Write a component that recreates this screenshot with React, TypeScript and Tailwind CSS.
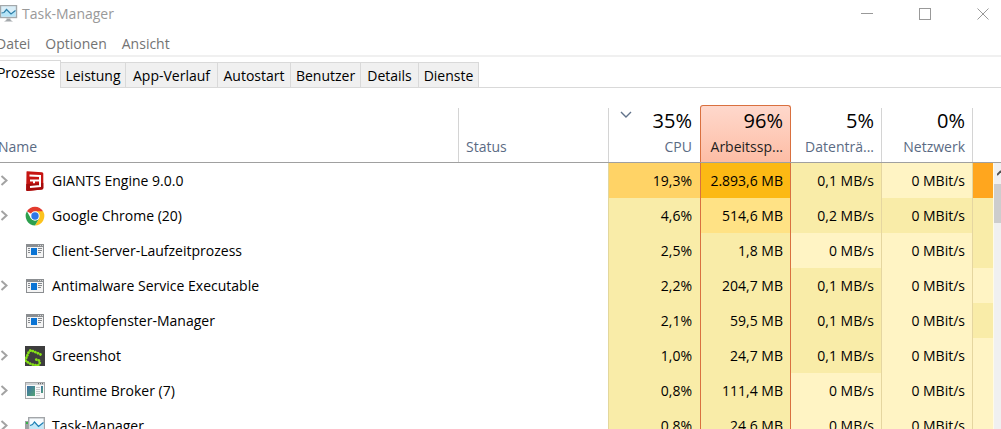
import { useState } from "react";
import type { ReactNode } from "react";
import clsx from "clsx";

type IconName = "giants" | "chrome" | "service" | "greenshot" | "broker" | "taskmgr";
type Heat = "low" | "mid" | "warm" | "high" | "hot" | "max";

interface Process {
  name: string;
  icon: IconName;
  expandable?: boolean;
  cells: [string, Heat][];
}

const heatClass: Record<Heat, string> = {
  low: "bg-[#fff4c4]",
  mid: "bg-[#f9eca8]",
  warm: "bg-[#ffe285]",
  high: "bg-[#ffd366]",
  hot: "bg-[#fcb914]",
  max: "bg-[#ffa61e]",
};

// CPU, memory, disk, network and the partly visible GPU column
const processes: Process[] = [
  {
    name: "GIANTS Engine 9.0.0",
    icon: "giants",
    expandable: true,
    cells: [["19,3%", "high"], ["2.893,6 MB", "hot"], ["0,1 MB/s", "mid"], ["0 MBit/s", "low"], ["", "max"]],
  },
  {
    name: "Google Chrome (20)",
    icon: "chrome",
    expandable: true,
    cells: [["4,6%", "mid"], ["514,6 MB", "warm"], ["0,2 MB/s", "mid"], ["0 MBit/s", "mid"], ["", "mid"]],
  },
  {
    name: "Client-Server-Laufzeitprozess",
    icon: "service",
    cells: [["2,5%", "mid"], ["1,8 MB", "mid"], ["0 MB/s", "low"], ["0 MBit/s", "low"], ["", "mid"]],
  },
  {
    name: "Antimalware Service Executable",
    icon: "service",
    expandable: true,
    cells: [["2,2%", "mid"], ["204,7 MB", "mid"], ["0,1 MB/s", "mid"], ["0 MBit/s", "low"], ["", "low"]],
  },
  {
    name: "Desktopfenster-Manager",
    icon: "service",
    cells: [["2,1%", "mid"], ["59,5 MB", "mid"], ["0,1 MB/s", "mid"], ["0 MBit/s", "low"], ["", "mid"]],
  },
  {
    name: "Greenshot",
    icon: "greenshot",
    expandable: true,
    cells: [["1,0%", "mid"], ["24,7 MB", "mid"], ["0,1 MB/s", "mid"], ["0 MBit/s", "low"], ["", "low"]],
  },
  {
    name: "Runtime Broker (7)",
    icon: "broker",
    expandable: true,
    cells: [["0,8%", "mid"], ["111,4 MB", "mid"], ["0 MB/s", "low"], ["0 MBit/s", "low"], ["", "low"]],
  },
  {
    name: "Task-Manager",
    icon: "taskmgr",
    expandable: true,
    cells: [["0,8%", "mid"], ["24,6 MB", "mid"], ["0 MB/s", "low"], ["0 MBit/s", "low"], ["", "low"]],
  },
];

const tabs = [
  { label: "Prozesse", width: "w-[69px]" },
  { label: "Leistung", width: "w-[65px]" },
  { label: "App-Verlauf", width: "w-[92px]" },
  { label: "Autostart", width: "w-[73px]" },
  { label: "Benutzer", width: "w-[70px]" },
  { label: "Details", width: "w-[58px]" },
  { label: "Dienste", width: "w-[60px]" },
];

const cellBorder = [
  "border-l border-l-[#e3d79c] pr-2",
  "border-x border-x-[#d9703f] pr-[7px]",
  "border-r border-r-[#e5d6a0] pr-[7px]",
  "border-r border-r-[#e5d6a0] pr-[7px]",
  "",
];

function MonitorIcon() {
  return (
    <svg viewBox="0 0 18 18" className="size-[18px]" aria-hidden="true">
      <rect x="0.5" y="0.5" width="16" height="12" fill="#d9eef8" stroke="#a3a8ab" strokeWidth="1.4" />
      <path d="M1.5 8 L4 7.5 L6.5 4.5 L11 9 L15.5 5.5 V11.5 H1.5 Z" fill="#b5e4f7" />
      <path d="M1.5 8 L4 7.5 L6.5 4.5 L11 9 L15.5 5.5" fill="none" stroke="#2e7fa8" strokeWidth="1.2" />
      <path d="M6.5 13.5 h4 v1.5 l2.5 1.5 h-9 l2.5 -1.5 Z" fill="#a3a8ab" />
    </svg>
  );
}

function ProcessIcon({ name }: { name: IconName }) {
  switch (name) {
    case "giants":
      return (
        <svg viewBox="0 0 20 20" className="size-5" aria-hidden="true">
          <path d="M1.5 1 Q1.2 0.3 2.2 0.3 L17 1.3 Q18.3 1.4 18.3 2.6 V17 Q18.3 18.3 17 18.5 L2.4 20 Q1.2 20 1.2 19 Z" fill="#c61512" />
          <path d="M1.3 13 L18.3 12 V17 Q18.3 18.3 17 18.5 L2.4 20 Q1.2 20 1.2 19 Z" fill="#a50c0c" />
          <path d="M4.5 4.6 L15 5 V15 L5 15.9 M15 9.4 H5 M9 9.4 V12.2" fill="none" stroke="#fff" strokeWidth="2" />
        </svg>
      );
    case "chrome":
      return (
        <svg viewBox="0 0 20 20" className="size-5" aria-hidden="true">
          <path d="M10 10 L1.9 5.3 A9.4 9.4 0 0 1 18.1 5.3 Z" fill="#e33b2e" />
          <path d="M10 5.3 H18.1 A9.4 9.4 0 0 1 10 19.4 L14.1 12.4 Z" fill="#fcc31e" />
          <path d="M1.9 5.3 L5.9 12.4 L14.1 12.4 L10 19.4 A9.4 9.4 0 0 1 1.9 5.3 Z" fill="#2da04e" />
          <circle cx="10" cy="10" r="4.7" fill="#fff" />
          <circle cx="10" cy="10" r="3.7" fill="#2d76e8" />
        </svg>
      );
    case "service":
      return (
        <svg viewBox="0 0 20 20" className="size-5" shapeRendering="crispEdges" aria-hidden="true">
          <rect x="1" y="3" width="18" height="14" fill="#8b8e91" />
          <rect x="2" y="6" width="16" height="10" fill="#f4f4f4" />
          <path d="M13 4.5 h1 M15 4.5 h1 M17 4.5 h1" stroke="#d8d8d8" />
          <rect x="6" y="7" width="6" height="7" fill="#0b74d4" />
          <path d="M3 7.5 h2 M3 9.5 h2 M3 11.5 h2 M13 7.5 h4 M13 9.5 h4 M13 11.5 h3" stroke="#85888c" />
        </svg>
      );
    case "greenshot":
      return (
        <svg viewBox="0 0 20 20" className="size-5" aria-hidden="true">
          <rect width="20" height="20" fill="#3d3d3d" />
          <path
            d="M15.5 8.5 L12 6.8 L9 5.5 L5.5 4.2 L3.5 6.5 L2.3 9.5 L1 12.5 M0.5 14.5 L3 16.5 L6 18 L9 19 L13 19.5 L15 16.5 L14 14.5 L11.5 13.6 L9 13"
            fill="none"
            stroke="#84df16"
            strokeWidth="2.7"
            strokeLinecap="round"
            strokeDasharray="0.1 2.7"
          />
        </svg>
      );
    case "broker":
      return (
        <svg viewBox="0 0 20 20" className="size-5" aria-hidden="true">
          <defs>
            <linearGradient id="broker-pane" x1="0" y1="0" x2="1" y2="1">
              <stop offset="0" stopColor="#3b6fa8" />
              <stop offset="1" stopColor="#55a474" />
            </linearGradient>
          </defs>
          <rect x="0.5" y="1.5" width="19" height="16" fill="#f8f8f8" stroke="#a4a6a8" />
          <path d="M1 3 h18" stroke="#cfd2d4" strokeWidth="2" />
          <path d="M13 2.7 h1 M15 2.7 h1 M17 2.7 h1" stroke="#555" />
          <rect x="2" y="5" width="8" height="10" fill="url(#broker-pane)" />
          <path d="M11 6.5 h4 M11 8.5 h4 M11 10.5 h4 M11 12.5 h4 M11 14.5 h4" stroke="#c6c8ca" />
          <rect x="16" y="5" width="2" height="7" fill="url(#broker-pane)" />
        </svg>
      );
    case "taskmgr":
      return (
        <svg viewBox="0 0 20 20" className="size-5" aria-hidden="true">
          <rect x="0" y="5" width="4" height="13" fill="#9da0a3" />
          <rect x="1" y="6" width="2" height="2" fill="#36b34a" />
          <rect x="3.7" y="1.7" width="15.6" height="12.6" fill="#f6fbfe" stroke="#a3a6a9" strokeWidth="1.4" />
          <path d="M5 9.5 L7.5 8.5 L9.5 6 L13.5 10.5 L18.5 6.5 V13.5 H5 Z" fill="#c3e8f8" />
          <path d="M5 9.5 L7.5 8.5 L9.5 6 L13.5 10.5 L18.5 6.5" fill="none" stroke="#1c7fb4" strokeWidth="1.2" />
          <path d="M8 15 h7 v2 l2 1.5 h-11 l2 -1.5 Z" fill="#a3a6a9" />
        </svg>
      );
  }
}

function WindowButton({ label, children }: { label: string; children: ReactNode }) {
  return (
    <button type="button" aria-label={label} className="text-[#999999]">
      <svg viewBox="0 0 12 12" className="size-3" fill="none" stroke="currentColor" aria-hidden="true">
        {children}
      </svg>
    </button>
  );
}

interface UsageHeaderProps {
  percent: string;
  label: string;
  sorted?: boolean;
  selected?: boolean;
}

function UsageHeader({ percent, label, sorted, selected }: UsageHeaderProps) {
  return (
    <th scope="col" className="h-[58px] border-b border-[#a0a0a0] p-0 align-bottom font-normal">
      <button
        type="button"
        className={clsx(
          "flex w-full flex-col items-end justify-end pb-[3px]",
          selected
            ? "h-[57px] rounded-t-[3px] border border-b-0 border-[#d9703f] bg-linear-to-b from-[#fed8cc] to-[#fdbda5] pr-[7px]"
            : "h-[54px]",
          sorted && "border-l border-[#d4d4d4] pr-2",
          !selected && !sorted && "border-r border-[#d4d4d4] pr-[7px]"
        )}
      >
        <span className="flex w-full items-start justify-end text-xl leading-7 text-black">
          {sorted && (
            <svg viewBox="0 0 12 8" className="mt-1 mr-auto ml-[11px] h-2 w-3" fill="none" stroke="#61728a" strokeWidth="1.4" aria-hidden="true">
              <path d="M1 1 L6 6 L11 1" />
            </svg>
          )}
          {percent}
        </span>
        <span className={clsx("leading-6", selected ? "text-[#1e1e1e]" : "text-[#5b6b84]")}>{label}</span>
      </button>
    </th>
  );
}

export default function App() {
  const [activeTab, setActiveTab] = useState("Prozesse");

  return (
    <div className="h-screen overflow-hidden bg-white font-['Open_Sans','Noto_Sans',sans-serif] text-sm text-black">
      <div className="-ml-2 flex h-full flex-col">
        {/* Title bar */}
        <header className="flex h-7 items-center justify-between pr-3 pl-2 text-[#999999]">
          <div className="flex items-center gap-1">
            <MonitorIcon />
            <h1>Task-Manager</h1>
          </div>
          <div className="flex items-center gap-[46px]">
            <WindowButton label="Minimieren">
              <path d="M0 5.5 h12" />
            </WindowButton>
            <WindowButton label="Maximieren">
              <rect x="0.5" y="0.5" width="11" height="11" />
            </WindowButton>
            <WindowButton label="Schließen">
              <path d="M0.5 0.5 L11.5 11.5 M11.5 0.5 L0.5 11.5" />
            </WindowButton>
          </div>
        </header>

        {/* Menu */}
        <nav className="flex h-[29px] items-end gap-[15px] border-b-2 border-[#f0f0f0] pb-px pl-1 text-[#737373]">
          <button type="button">Datei</button>
          <button type="button">Optionen</button>
          <button type="button">Ansicht</button>
        </nav>

        {/* Tabs */}
        <div role="tablist" className="flex h-[31px] shrink-0 items-end border-b border-[#d9d9d9]">
          {tabs.map(({ label, width }) => (
            <button
              key={label}
              type="button"
              role="tab"
              aria-selected={activeTab === label}
              onClick={() => setActiveTab(label)}
              className={clsx(
                "shrink-0 border-t border-r border-[#d9d9d9] text-center",
                width,
                activeTab === label ? "-mb-px h-7 bg-white pb-[3px]" : "h-[25px] bg-[#f0f0f0] pt-0.5"
              )}
            >
              {label}
            </button>
          ))}
        </div>

        {/* Process list */}
        <main className="flex min-h-0 flex-1 overflow-hidden pt-[17px]">
          <div className="min-w-0 flex-1">
            <table className="w-full table-fixed border-separate border-spacing-0">
              <colgroup>
                <col />
                <col className="w-[149px]" />
                <col className="w-[92px]" />
                <col className="w-[91px]" />
                <col className="w-[91px]" />
                <col className="w-[91px]" />
                <col className="w-5" />
              </colgroup>
              <thead>
                <tr className="text-[#5b6b84]">
                  <th scope="col" className="border-b border-[#a0a0a0] p-0 align-bottom font-normal">
                    <button type="button" className="flex h-[54px] w-full items-end border-r border-[#d4d4d4] pb-[3px] pl-1.5 leading-6">
                      Name
                    </button>
                  </th>
                  <th scope="col" className="border-b border-[#a0a0a0] p-0 align-bottom font-normal">
                    <button type="button" className="flex h-[54px] w-full items-end pb-[3px] pl-[7px] leading-6">
                      Status
                    </button>
                  </th>
                  <UsageHeader percent="35%" label="CPU" sorted />
                  <UsageHeader percent="96%" label="Arbeitssp..." selected />
                  <UsageHeader percent="5%" label="Datenträ..." />
                  <UsageHeader percent="0%" label="Netzwerk" />
                  <td className="border-b border-[#a0a0a0]" />
                </tr>
              </thead>
              <tbody>
                {processes.map((process) => (
                  <tr key={process.name} className="h-[35px]">
                    <td className="p-0 pl-2">
                      <div className="flex items-center">
                        <span className="flex w-[25px] items-center">
                          {process.expandable && (
                            <button type="button" aria-label={`${process.name} erweitern`}>
                              <svg viewBox="0 0 8 12" className="h-3 w-2" fill="none" stroke="#a3a3a3" strokeWidth="2" aria-hidden="true">
                                <path d="M1.5 1 L6.5 5.5 L1.5 10" />
                              </svg>
                            </button>
                          )}
                        </span>
                        <ProcessIcon name={process.icon} />
                        <span className="pl-[7px] whitespace-nowrap">{process.name}</span>
                      </div>
                    </td>
                    <td />
                    {process.cells.map(([value, heat], i) => (
                      <td key={i} className={clsx("p-0 text-right whitespace-nowrap", cellBorder[i], heatClass[heat])}>
                        {value}
                      </td>
                    ))}
                  </tr>
                ))}
              </tbody>
            </table>
          </div>

          {/* Scrollbar */}
          <div className="flex w-2 shrink-0 flex-col">
            <div className="h-[58px] shrink-0 border-b border-[#a0a0a0]" />
            <div className="flex-1 border-l border-[#fffbe8] bg-[#f0f0f0]">
              <button type="button" aria-label="Nach oben" className="flex h-[21px] w-full items-center justify-end overflow-hidden">
                <svg viewBox="0 0 4 8" className="h-2 w-1" fill="none" stroke="#505050" strokeWidth="1.8" aria-hidden="true">
                  <path d="M0 5 L4 1" />
                </svg>
              </button>
              <div className="h-[39px] bg-[#cdcdcd]" />
            </div>
          </div>
        </main>
      </div>
    </div>
  );
}
